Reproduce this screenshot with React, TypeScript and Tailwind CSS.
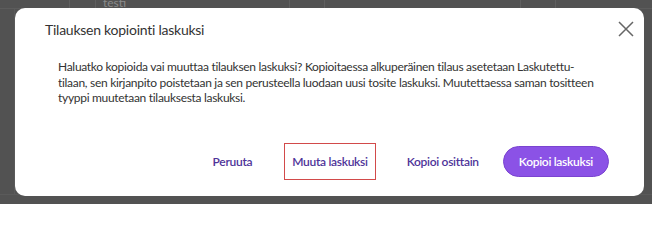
import React from "react";

export default function App() {
  const font = { fontFamily: "Lato, 'Noto Sans', sans-serif" };
  return (
    <div className="relative h-[204px] w-[652px] overflow-hidden bg-[#525252]" style={font}>
      {/* faint background table */}
      <div className="flex h-[9px] border-b border-[#5c5c5c]">
        <div className="w-[70px] border-r border-[#5f5f5f]" />
        <div className="w-[26px] border-r border-[#5f5f5f]" />
        <div className="w-[194px] border-r border-[#5f5f5f] pl-[7px] text-[12px] leading-[6px] text-[#8a8a8a]">testi</div>
        <div className="w-[35px] border-r border-[#5f5f5f]" />
        <div className="w-[196px] border-r border-[#5f5f5f]" />
        <div className="w-[35px] border-r border-[#5f5f5f]" />
        <div className="flex-1" />
      </div>
      <div className="flex h-[186px] border-b border-[#5a5a5a]">
        <div className="w-[15px] border-r border-[#5a5a5a]" />
        <div className="w-[30px] border-r border-[#5a5a5a]" />
        <div className="w-[25px] border-r border-[#5a5a5a]" />
      </div>

      {/* dialog overlay */}
      <div className="absolute left-[15px] top-[8px] flex h-[188px] w-[629px] flex-col rounded-[10px] bg-white">
        <div className="flex items-start justify-between pl-[30px] pr-[10px] pt-[13px]">
          <h2 className="text-[14px] leading-[18px] tracking-[-0.25px] text-[#333333]">Tilauksen kopiointi laskuksi</h2>
          <button className="flex h-[16px] w-[16px] items-center justify-center text-[#666666]">
            <svg width="16" height="16" viewBox="0 0 16 16" fill="none" stroke="currentColor" strokeWidth="1.5">
              <path d="M1 1 L15 15 M15 1 L1 15" />
            </svg>
          </button>
        </div>
        <p className="mt-[20px] whitespace-nowrap pl-[43px] text-[12px] leading-[15.5px] tracking-[-0.3px] text-[#333333]">
          Haluatko kopioida vai muuttaa tilauksen laskuksi? Kopioitaessa alkuperäinen tilaus asetetaan Laskutettu-
          <br />
          tilaan, sen kirjanpito poistetaan ja sen perusteella luodaan uusi tosite laskuksi. Muutettaessa saman tositteen
          <br />
          tyyppi muutetaan tilauksesta laskuksi.
        </p>
        <div className="mt-auto mb-[16px] flex items-center justify-end pr-[35px]">
          <button className="flex h-[37px] items-center px-[10px] text-[12px] font-semibold tracking-[-0.3px] text-[#4e3499]">Peruuta</button>
          <button className="ml-[22px] flex h-[37px] items-center border border-[#d24a4a] px-[7px] text-[12px] font-semibold tracking-[-0.3px] text-[#4e3499]">Muuta laskuksi</button>
          <button className="ml-[21px] flex h-[37px] items-center px-[10px] text-[12px] font-semibold tracking-[-0.3px] text-[#4e3499]">Kopioi osittain</button>
          <button className="ml-[14px] flex h-[31px] items-center rounded-full border border-[#7a44d0] bg-[#8b52e6] px-[15px] text-[12px] font-semibold tracking-[-0.3px] text-white">Kopioi laskuksi</button>
        </div>
      </div>
    </div>
  );
}
